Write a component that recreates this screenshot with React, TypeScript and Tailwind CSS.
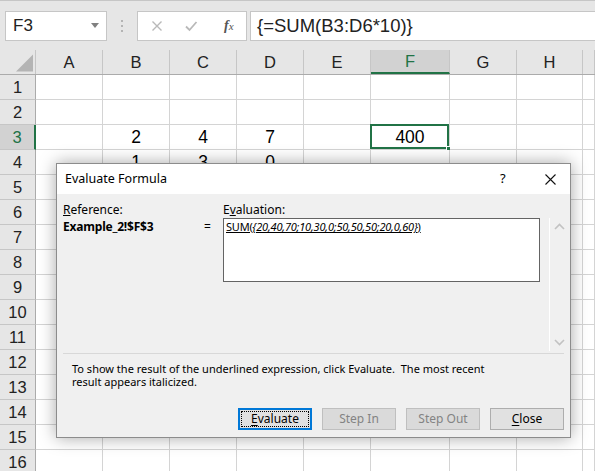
import React from "react";

const COLS = ["A", "B", "C", "D", "E", "F", "G", "H", ""];
const COL_W = ["w-[67px]", "w-[67px]", "w-[67px]", "w-[67px]", "w-[67px]", "w-[79px]", "w-[67px]", "w-[66px]", "flex-1"];

const CELLS: Record<string, string> = {
  B3: "2",
  C3: "4",
  D3: "7",
  F3: "400",
  B4: "1",
  C4: "3",
  D4: "0",
};

function NameBox() {
  return (
    <div className="flex h-[30px] w-[102px] items-center justify-between border border-[#c6c6c6] bg-white pl-[7px] pr-[7px]">
      <span className="text-[17px] text-[#222]">F3</span>
      <span className="h-0 w-0 border-x-[4px] border-t-[5px] border-x-transparent border-t-[#808080]" />
    </div>
  );
}

function FormulaBar() {
  return (
    <div className="flex h-[50px] items-center border-t border-[#c6c6c6] bg-[#e6e6e6] pl-[5px]">
      <NameBox />
      <div className="flex w-[30px] flex-col items-center gap-[3px]">
        <span className="h-[2px] w-[2px] bg-[#b4b4b4]" />
        <span className="h-[2px] w-[2px] bg-[#b4b4b4]" />
        <span className="h-[2px] w-[2px] bg-[#b4b4b4]" />
      </div>
      <div className="flex h-[30px] w-[110px] items-center border border-[#c6c6c6] bg-white">
        <svg width="85" height="28" viewBox="0 0 85 28">
          <path d="M14.5 9.5l9 9M23.5 9.5l-9 9" stroke="#b9b9b9" strokeWidth="1.4" fill="none" />
          <path d="M48 14.5l3.5 3.5 7-8" stroke="#b9b9b9" strokeWidth="1.8" fill="none" />
        </svg>
        <span className="ml-[1px] text-[14px] italic text-[#555] [font-family:'Liberation_Serif',serif]">
          <span className="font-semibold">f</span>
          <span className="text-[11px]">x</span>
        </span>
      </div>
      <div className="ml-[3px] flex h-[30px] flex-1 items-center border-y border-l border-[#c6c6c6] bg-white pl-[6px] text-[18.5px] text-[#222]">
        {"{=SUM(B3:D6*10)}"}
      </div>
    </div>
  );
}

function HeaderRow() {
  return (
    <div className="flex h-[25px] border-b border-[#ababab] bg-[#e6e6e6]">
      <div className="relative w-[36px] border-r border-[#c6c6c6]">
        <svg className="absolute left-0 top-0" width="36" height="24" viewBox="0 0 36 24">
          <path d="M16 21.5L33 4.5V21.5Z" fill="#b4b4b4" />
        </svg>
      </div>
      {COLS.map((c, i) => (
        <div
          key={i}
          className={`${COL_W[i]} flex items-center justify-center border-r border-[#c6c6c6] text-[16.5px] ${
            c === "F" ? "border-b-2 border-b-[#217346] bg-[#d2d2d2] text-[#217346]" : "text-[#222]"
          }`}
        >
          {c}
        </div>
      ))}
    </div>
  );
}

function GridRow({ row }: { row: number }) {
  const active = row === 3;
  return (
    <div className="flex h-[25px]">
      <div
        className={`flex w-[36px] items-center justify-center border-b border-[#c6c6c6] text-[16.5px] ${
          active ? "border-r-2 border-r-[#217346] bg-[#d2d2d2] text-[#217346]" : "border-r border-r-[#ababab] bg-[#e6e6e6] text-[#222]"
        }`}
      >
        {row}
      </div>
      {COLS.map((c, i) => {
        const key = `${c}${row}`;
        const sel = key === "F3";
        return (
          <div
            key={i}
            className={`${COL_W[i]} relative flex items-center justify-center border-b border-r border-[#d4d4d4] bg-white text-[17.5px] text-black`}
          >
            {sel && (
              <>
                <div className="absolute -left-px -top-px bottom-0 right-0 border-2 border-[#217346]" />
                <div className="absolute -bottom-[4px] -right-[4px] h-[7px] w-[7px] border border-white bg-[#217346]" />
              </>
            )}
            <span className="relative">{CELLS[key] ?? ""}</span>
          </div>
        );
      })}
    </div>
  );
}

function Chevron({ up }: { up?: boolean }) {
  return (
    <svg width="11" height="7" viewBox="0 0 11 7">
      <path d={up ? "M1 6l4.5-4.5L10 6" : "M1 1l4.5 4.5L10 1"} stroke="#c2c2c2" strokeWidth="1.6" fill="none" />
    </svg>
  );
}

function Button({ label, accel, focused, disabled }: { label: string; accel?: number; focused?: boolean; disabled?: boolean }) {
  const chars = label.split("");
  let tone = "border border-[#adadad] bg-[#e1e1e1] text-black";
  if (focused) tone = "border-2 border-[#0078d7] bg-[#e1e1e1] p-[1px] text-black";
  if (disabled) tone = "border border-[#bfbfbf] bg-[#dadada] text-[#838383]";
  return (
    <button className={`flex h-[22px] w-[74px] items-center justify-center text-[12px] ${tone}`}>
      <span className={`flex h-full w-full items-center justify-center ${focused ? "border border-dotted border-black" : ""}`}>
        {chars.map((ch, i) => (
          <span key={i} className={accel === i ? "underline underline-offset-2" : ""}>
            {ch === " " ? "\u00a0" : ch}
          </span>
        ))}
      </span>
    </button>
  );
}

function EvaluateDialog() {
  return (
    <div className="absolute left-[56px] top-[163px] flex h-[275px] w-[515px] flex-col border border-[#8c8c8c] bg-[#f0f0f0] text-[12px] text-black shadow-[0_0_16px_rgba(0,0,0,0.35)] [font-family:'Noto_Sans','Liberation_Sans',sans-serif]">
      <div className="flex h-[30px] items-center bg-white pl-[8px]">
        <span className="flex-1 text-[12.5px]">Evaluate Formula</span>
        <span className="w-[45px] text-[13px]">?</span>
        <svg className="mr-[14px]" width="11" height="11" viewBox="0 0 11 11">
          <path d="M0.5 0.5l10 10M10.5 0.5l-10 10" stroke="#111" strokeWidth="1.1" />
        </svg>
      </div>

      <div className="flex h-[159px]">
        <div className="w-[147px] pl-[6px] pt-[8px] leading-[15px]">
          <div>
            <span className="underline">R</span>eference:
          </div>
          <div className="mt-[2px] font-bold tracking-[-0.2px]">Example_2!$F$3</div>
        </div>
        <div className="w-[19px] pt-[25px] leading-[15px]">=</div>
        <div className="w-[326px] pt-[8px] leading-[15px]">
          <div>
            E<span className="underline">v</span>aluation:
          </div>
          <div className="mt-[1px] h-[64px] w-[317px] border border-[#646464] bg-white px-[2px] pt-[1px] text-[11px] leading-[14px] tracking-[-0.2px]">
            <span className="underline">
              SUM(<i>{"{20,40,70;10,30,0;50,50,50;20,0,60}"}</i>)
            </span>
          </div>
        </div>
        <div className="mt-[24px] flex h-[133px] w-[20px] flex-col items-center justify-between border-l border-white pb-[5px] pt-[5px]">
          <Chevron up />
          <Chevron />
        </div>
      </div>

      <div className="mx-[6px] h-px bg-[#d8d8d8]" />

      <div className="ml-[15px] mt-[8px] text-[11px] leading-[13px]">
        To show the result of the underlined expression, click Evaluate.&nbsp; The most recent
        <br />
        result appears italicized.
      </div>

      <div className="mt-[20px] flex justify-end gap-[10px] pr-[6px]">
        <Button label="Evaluate" accel={0} focused />
        <Button label="Step In" disabled />
        <Button label="Step Out" disabled />
        <Button label="Close" accel={0} />
      </div>
    </div>
  );
}

export default function App() {
  const rows = Array.from({ length: 16 }, (_, i) => i + 1);
  return (
    <div className="relative h-[471px] w-[595px] overflow-hidden bg-white [font-family:'Liberation_Sans',Arial,sans-serif]">
      <FormulaBar />
      <HeaderRow />
      {rows.map((r) => (
        <GridRow key={r} row={r} />
      ))}
      <EvaluateDialog />
    </div>
  );
}
